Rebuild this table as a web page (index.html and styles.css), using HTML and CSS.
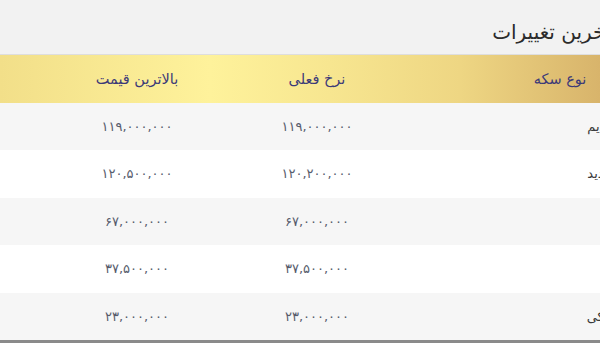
FILE: index.html
```html
<!DOCTYPE html>
<html lang="fa">
<head>
<meta charset="utf-8">
<title>آخرین تغییرات</title>
<link rel="stylesheet" href="styles.css">
</head>
<body>
<div class="panel" dir="rtl">
  <h2 class="title">آخرین تغییرات</h2>
  <div class="table">
    <div class="head">
      <div class="pad"></div>
      <div class="hcell">نوع سکه</div>
      <div class="pad"></div>
      <div class="hcell">نرخ فعلی</div>
      <div class="hcell">بالاترین قیمت</div>
      <div class="pad"></div>
    </div>
    <div class="row odd">
      <div class="cell name">سکه تمام بهار آزادی طرح قدیم</div>
      <div class="pad"></div>
      <div class="cell num">۱۱۹,۰۰۰,۰۰۰</div>
      <div class="cell num">۱۱۹,۰۰۰,۰۰۰</div>
      <div class="pad"></div>
    </div>
    <div class="row">
      <div class="cell name">سکه تمام بهار آزادی طرح جدید</div>
      <div class="pad"></div>
      <div class="cell num">۱۲۰,۲۰۰,۰۰۰</div>
      <div class="cell num">۱۲۰,۵۰۰,۰۰۰</div>
      <div class="pad"></div>
    </div>
    <div class="row odd">
      <div class="cell name">نیم سکه بهار</div>
      <div class="pad"></div>
      <div class="cell num">۶۷,۰۰۰,۰۰۰</div>
      <div class="cell num">۶۷,۰۰۰,۰۰۰</div>
      <div class="pad"></div>
    </div>
    <div class="row">
      <div class="cell name">ربع سکه بهار</div>
      <div class="pad"></div>
      <div class="cell num">۳۷,۵۰۰,۰۰۰</div>
      <div class="cell num">۳۷,۵۰۰,۰۰۰</div>
      <div class="pad"></div>
    </div>
    <div class="row odd">
      <div class="cell name">سکه یک گرمی بهار آزادی بانکی</div>
      <div class="pad"></div>
      <div class="cell num">۲۳,۰۰۰,۰۰۰</div>
      <div class="cell num">۲۳,۰۰۰,۰۰۰</div>
      <div class="pad"></div>
    </div>
  </div>
</div>
</body>
</html>
```

FILE: styles.css
```css
html, body {
  margin: 0;
  padding: 0;
}
body {
  background: #f2f2f2;
  overflow: hidden;
  width: 600px;
  height: 343px;
  font-family: "DejaVu Sans", "Noto Sans", sans-serif;
}
.panel {
  width: 760px;
  background: #f2f2f2;
}
.title {
  margin: 0;
  height: 55px;
  box-sizing: border-box;
  padding: 17px 149px 0 0;
  font-size: 20px;
  font-weight: normal;
  color: #2b2b2b;
  line-height: 30px;
  border-bottom: 1px solid #dedede;
}
.table {
  border-bottom: 3px solid #8a8a8a;
}
.head {
  display: grid;
  grid-template-columns: 160px 80px 113px 180px 180px 47px;
  height: 47.5px;
  align-items: center;
  background: linear-gradient(to right, #f2df89 0px, #fef29b 210px, #f7e690 330px, #eed683 460px, #d8b46b 600px, #cfa860 760px);
}
.hcell {
  text-align: center;
  font-size: 14.5px;
  color: #3c3a78;
  white-space: nowrap;
}
.row {
  display: grid;
  grid-template-columns: 176px 177px 180px 180px 47px;
  height: 47.5px;
  align-items: center;
  background: #ffffff;
}
.row.odd {
  background: #f6f6f6;
}
.cell {
  text-align: center;
  color: #575c6c;
}
.name {
  font-size: 13px;
  color: #3a3a3a;
  white-space: nowrap;
}
.num {
  font-size: 13px;
}
```
